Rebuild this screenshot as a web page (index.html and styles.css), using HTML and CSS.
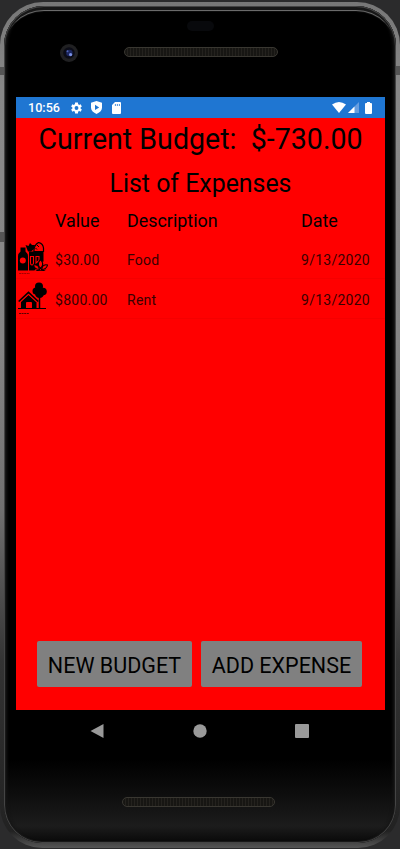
FILE: index.html
```html
<!DOCTYPE html>
<html lang="en">
<head>
<meta charset="utf-8">
<title>Current Budget</title>
<link rel="stylesheet" href="styles.css">
</head>
<body>
<div class="phone">
  <div class="face">
  <header class="bezel-top">
    <div class="sensor"></div>
    <div class="camera-row">
      <svg class="camera" viewBox="0 0 18 18"><circle cx="9" cy="9" r="9" fill="#202022"/><circle cx="9" cy="9" r="5.800" fill="#0b0c17"/><circle cx="9.400" cy="9" r="3.200" fill="#1c265e"/><circle cx="7.500" cy="7.200" r="1" fill="#5063b8"/><circle cx="10.600" cy="10.600" r="1.600" fill="#7b91e6"/></svg>
      <div class="speaker"></div>
    </div>
  </header>
  <main class="screen">
    <div class="status">
      <span class="clock">10:56</span>
      <svg class="gear" viewBox="2 2 20 20"><path fill="#fff" fill-rule="evenodd" d="M19.400 13a7.800 7.800 0 0 0 0-2l2.300-1.700-2.200-4-2.700 1.100a7.500 7.500 0 0 0-1.800-1L14.600 2H9.400L9 5.400a7.500 7.500 0 0 0-1.800 1L4.500 5.300l-2.200 4L4.600 11a7.800 7.800 0 0 0 0 2l-2.300 1.700 2.200 4 2.700-1.100a7.500 7.500 0 0 0 1.800 1l.4 3.400h5.200l.4-3.400a7.500 7.500 0 0 0 1.800-1l2.700 1.100 2.200-4zM12 15.500a3.500 3.500 0 1 1 0-7 3.500 3.500 0 0 1 0 7z"/></svg>
      <svg class="shield" viewBox="0 0 11 13"><path fill="#fff" fill-rule="evenodd" d="M5.500 0 11 1.800v5C11 9.700 8.500 11.700 5.500 13 2.500 11.700 0 9.700 0 6.800v-5zM4 3.800v5.200L8.200 6.400z"/></svg>
      <svg class="card" viewBox="0 0 9 12"><path fill="#fff" fill-rule="evenodd" d="M3 0h5q1 0 1 1v10q0 1-1 1H1q-1 0-1-1V3zM2.900 2v2h.8v-2zM4.900 2v2h.8v-2zM6.900 2v2h.8v-2z"/></svg>
      <span class="spacer"></span>
      <svg class="wifi" viewBox="0 0 14 11"><path fill="#fff" d="M0 2.600Q7-2.400 14 2.600L7 11z"/></svg>
      <svg class="signal" viewBox="0 0 11 11"><path fill="#669ee0" d="M0 11 11 0v11z"/><path fill="#fff" d="M0 11 6.500 4.500V11z"/></svg>
      <svg class="battery" viewBox="0 0 7 12"><path fill="#fff" d="M2 0h3v1h1q1 0 1 1v9q0 1-1 1H1q-1 0-1-1V2q0-1 1-1h1z"/></svg>
    </div>
    <h1 class="budget">Current Budget:&nbsp; $-730.00</h1>
    <h2 class="title">List of Expenses</h2>
    <div class="row head"><span></span><span>Value</span><span>Description</span><span>Date</span></div>
    <div class="row item">
      <svg class="picture" viewBox="0 0 30 34">
        <path d="M2.500 5.500h5v4q2.500 2 2.500 5v14H0v-14q0-3 2.500-5z"/><circle cx="4.800" cy="18.500" r="3" fill="#f00"/>
        <path d="M11 9.500h14.500v10l-4 1-3 5-2 3H11z"/>
        <path d="M12.500 14.500v6.500q0 2 1.500 2t1.500-2v-6.500zM18 14.500v6.500l3-2.500v-4z" fill="none" stroke="#f00" stroke-width="1.100"/>
        <path d="M7.500 3l3 1 1.500-3 2 2 3 0-1 4-3 2.500h-3L9 7z"/>
        <path d="M16 9.500q-.5-6 4.500-9 4.500 1 5 5.500v3.500z" fill="#f00" stroke="#000" stroke-width="1.200"/><path d="m19 3 2 2M17.500 6l1.500 1.500" stroke="#000"/>
        <g fill="#f00" stroke="#000" stroke-width="1.100"><path d="M15.500 23q3-1 5 1.500l1 3q-5 0-6-4.500zM29.500 23q-3-1-5 1.500l-1 3q5 0 6-4.500z"/><path d="M22.500 17.500q-4.500 4.500 0 9 4.500-4.500 0-9z"/></g>
        <path d="M16.500 27.500q6 1.500 12 0l-2.500 1.500h-7z"/><path d="M1 31.500h11" stroke="#700" stroke-width=".7" stroke-dasharray="2 .6"/>
      </svg>
      <span>$30.00</span><span>Food</span><span>9/13/2020</span>
    </div>
    <div class="row item">
      <svg class="picture" viewBox="0 0 30 34">
        <circle cx="21" cy="4.500" r="4"/><circle cx="18" cy="9" r="3.500"/><circle cx="25" cy="9.500" r="3.800"/><circle cx="21.500" cy="11.500" r="4.500"/>
        <path d="M21.500 14v13" stroke="#000" stroke-width="1.500"/><path d="M0 26.500h28" stroke="#000"/>
        <path d="M3 19.500 10.500 13l8 7v7H14v-6q0-1-1-1H9q-1 0-1 1v6H3z"/><path d="m.5 20 10-9.500 9 8.500" fill="none" stroke="#f00" stroke-width="3.500"/><path d="m.7 19.500 9.800-9.200 9.800 9.200" fill="none" stroke="#000" stroke-width="1.700"/>
        <path d="M1 31.500h10" stroke="#500" stroke-dasharray="2 .6"/>
      </svg>
      <span>$800.00</span><span>Rent</span><span>9/13/2020</span>
    </div>
    <div class="actions"><button class="new">NEW BUDGET</button><button class="add">ADD EXPENSE</button></div>
  </main>
  <nav class="nav">
    <svg viewBox="0 0 14 16"><path fill="#999" d="M13.500 1v14L.5 8z"/></svg>
    <svg viewBox="0 0 14 16"><circle cx="7" cy="8" r="6.700" fill="#999"/></svg>
    <svg viewBox="0 0 14 16"><rect y="1" width="14" height="14" rx="1" fill="#999"/></svg>
  </nav>
  <footer class="bezel-bottom"><div class="speaker"></div></footer>
  </div>
</div>
</body>
</html>
```
FILE: styles.css
```css
* { box-sizing: border-box; }
body { margin: 0; height: 849px; overflow: hidden; background: #2b2b2c; font-family: Roboto, sans-serif; color: #000; padding-top: 2px; }
svg { display: block; flex: none; }
.phone {
  height: 846px; padding: 4px 4px 5px; border-radius: 43px 43px 42px 42px;
  background:
    linear-gradient(#555, #555) 0 65px / 5px 8px no-repeat,
    linear-gradient(#555, #555) 100% 64px / 4px 9px no-repeat,
    linear-gradient(#555, #555) 0 230px / 5px 10px no-repeat,
    linear-gradient(#777 0, #888 10%, #858585 40%, #707070 60%, #333 78%, #222 98%, #555 100%);
}
.face {
  height: 837px; padding: 0 11px 0 12px; border-radius: 40px 40px 38px 38px;
  background: linear-gradient(#000 0, #000 90%, #0d0d0d 94%, #1c1c1c 98%, #080808 100%);
  box-shadow: inset 0 0 0 1px #444, inset 0 0 0 2px #181818, inset 0 5px 0 -1px #181818, inset 0 7px 1px -2px #777, inset 5px 0 3px -2px #151515, inset -5px 0 3px -2px #151515;
}
.bezel-top { height: 91px; padding-top: 15px; }
.sensor { width: 27px; height: 10px; margin-left: 171px; border-radius: 5px; background: #08090c; }
.camera-row { display: flex; align-items: center; height: 18px; margin-top: 13px; padding-left: 44px; }
.camera { width: 18px; height: 18px; }
.speaker {
  width: 154px; height: 10px; border: 1px solid #393731; border-radius: 5px;
  background: repeating-linear-gradient(90deg, #171613 0 2px, #24221e 2px 3px);
}
.camera-row .speaker { margin: -3px 0 0 46px; }
.screen { width: 369px; height: 613px; background: #f00; display: flex; flex-direction: column; }
.status { height: 21px; flex: none; padding: 0 13px 0 12px; background: #1f76d2; display: flex; align-items: center; }
.clock { width: 43px; font-size: 12.600px; font-weight: 500; line-height: 21px; color: #fff; }
.gear { width: 11px; height: 12px; }
.shield { width: 11px; height: 13px; margin-left: 9px; }
.card { width: 9px; height: 12px; margin-left: 10px; }
.spacer { flex: 1; }
.wifi { width: 14px; height: 11px; }
.signal { width: 11px; height: 11px; margin-left: 2px; }
.battery { width: 7px; height: 12px; margin-left: 6px; }
.budget, .title { margin: 0; font-weight: 400; text-align: center; white-space: nowrap; }
.budget { height: 42px; font-size: 28.600px; line-height: 42px; }
.title { height: 48px; font-size: 24.900px; line-height: 48px; }
.row { display: grid; grid-template-columns: 39px 72px 174px 84px; align-items: center; flex: none; }
.head { height: 31px; font-size: 17.900px; line-height: 26px; align-items: start; }
.item { height: 40px; font-size: 14px; color: #380000; letter-spacing: .26px; border-bottom: 1px solid #f50000; }
.item span { padding-top: 2px; }
.picture { width: 30px; height: 34px; margin-left: 2px; }
.actions { display: flex; gap: 9px; margin: auto 0 23px 21px; }
button { height: 46px; border: 0; border-radius: 2px; padding: 2px 0 0; background: #808080; color: #000; font: 400 21.500px/46px Roboto, sans-serif; white-space: nowrap; }
.new { width: 155px; }
.add { width: 161px; }
.nav { height: 42px; display: flex; align-items: center; gap: 88.500px; padding-left: 74px; }
.nav svg { width: 14px; height: 16px; }
.bezel-bottom { padding: 45px 0 0 106px; }
.bezel-bottom .speaker { width: 153px; }
```
